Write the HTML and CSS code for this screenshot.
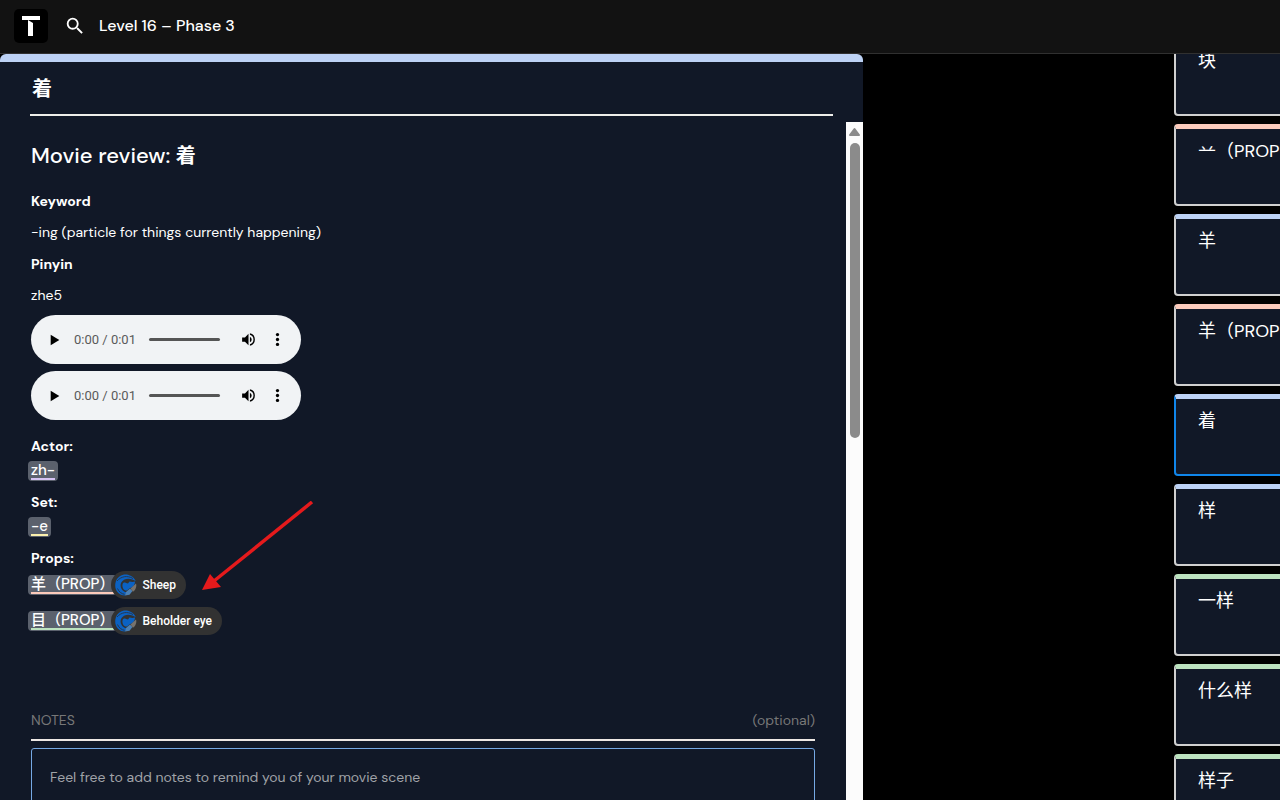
FILE: index.html
```html
<!DOCTYPE html>
<html lang="en">
<head>
<meta charset="utf-8">
<meta name="viewport" content="width=device-width, initial-scale=1">
<title>Level 16 – Phase 3</title>
<link rel="stylesheet" href="styles.css">
</head>
<body>
<svg width="0" height="0" class="sprite" aria-hidden="true">
  <symbol id="play" viewBox="0 0 24 24"><path d="M7 4v16l13-8z"/></symbol>
  <symbol id="volume" viewBox="0 0 24 24"><path d="M3 9v6h4l5 5V4L7 9H3zm13.500 3A4.500 4.500 0 0 0 14 7.970v8.050A4.470 4.470 0 0 0 16.500 12zM14 3.230v2.060a7 7 0 0 1 0 13.420v2.060a9 9 0 0 0 0-17.540z"/></symbol>
  <symbol id="more" viewBox="0 0 24 24"><circle cx="12" cy="5" r="2.300"/><circle cx="12" cy="12" r="2.300"/><circle cx="12" cy="19" r="2.300"/></symbol>
  <symbol id="eye" viewBox="0 0 22 22">
    <path fill="#0b62c4" d="M1 7C3 2 8-.5 13 .7c3.500.8 6.500 3.300 7.800 6.600C17.500 5 13 3.600 9 5.800 5.500 7.800 4.600 12 6.600 15c1 1.600 3 3 5 3.300L10 21.600C4 21.400.2 17 .2 11.500c0-1.600.2-3 .8-4.500z"/>
    <path fill="#0b62c4" d="M7.500 10.500c.5-2 2-2.500 3.500-1.500l2 .5 1.500-2 3 .5 2.500-.5c0 3-2 6-5 6.500l-3 2.500c-3 .5-5-2.500-4.500-6z"/>
    <path stroke="#26384f" stroke-width="1" fill="none" d="M2 7C6 2.500 12 1 18 4.500M2.500 14.500C4 18 7 20 9.500 20.300"/>
    <path fill="#4b80b5" d="M11 18l4-3.500 2.500 2.500-3 3.800-4.500.7z"/>
    <path fill="#77736e" d="M15.500 14.500L21 9.500c1 3-.5 6.500-3 8.300z"/>
  </symbol>
</svg>

<header class="topbar">
  <a class="logo" href="#" aria-label="Home">
    <svg viewBox="0 0 34 34" width="34" height="34"><path fill="#fff" d="M8 7h18v4H8zM14 11l5 3v13h-5z"/></svg>
  </a>
  <button class="search" type="button" aria-label="Search">
    <svg viewBox="0 0 24 24" width="22" height="22"><path fill="#fff" d="M15.500 14h-.79l-.28-.27A6.470 6.470 0 0 0 16 9.500 6.500 6.500 0 1 0 9.500 16c1.610 0 3.090-.59 4.230-1.570l.27.28v.79l5 4.990L20.490 19l-4.990-5zm-6 0a4.500 4.500 0 1 1 0-9 4.500 4.500 0 0 1 0 9z"/></svg>
  </button>
  <span class="level">Level 16 – Phase 3</span>
</header>

<main class="layout">
  <section class="panel">
    <div class="panel-head"><h1 lang="zh">着</h1></div>
    <div class="panel-scroll">
      <div class="content">
        <h2>Movie review: <b lang="zh">着</b></h2>
        <dl class="facts">
          <dt>Keyword</dt><dd>-ing (particle for things currently happening)</dd>
          <dt>Pinyin</dt><dd>zhe5</dd>
        </dl>
        <div class="players">
          <div class="player">
            <button type="button" aria-label="Play"><svg><use href="#play"/></svg></button>
            <span class="time">0:00 / 0:01</span>
            <input type="range" aria-label="Position" value="0">
            <button type="button" aria-label="Mute"><svg><use href="#volume"/></svg></button>
            <button type="button" aria-label="More options"><svg><use href="#more"/></svg></button>
          </div>
          <div class="player">
            <button type="button" aria-label="Play"><svg><use href="#play"/></svg></button>
            <span class="time">0:00 / 0:01</span>
            <input type="range" aria-label="Position" value="0">
            <button type="button" aria-label="Mute"><svg><use href="#volume"/></svg></button>
            <button type="button" aria-label="More options"><svg><use href="#more"/></svg></button>
          </div>
        </div>
        <div class="group">
          <h3>Actor:</h3>
          <a class="chip actor" href="#"><span>zh-</span></a>
        </div>
        <div class="group">
          <h3>Set:</h3>
          <a class="chip set" href="#"><span>-e</span></a>
        </div>
        <div class="group">
          <h3>Props:</h3>
          <ul class="props">
            <li><a class="chip pink" href="#"><span>羊（PROP）</span></a><button class="pill" type="button"><svg><use href="#eye"/></svg>Sheep</button></li>
            <li><a class="chip green" href="#"><span>目（PROP）</span></a><button class="pill" type="button"><svg><use href="#eye"/></svg>Beholder eye</button></li>
          </ul>
        </div>
        <div class="notes">
          <div class="notes-head"><label for="notes">NOTES</label><span>(optional)</span></div>
          <textarea id="notes" placeholder="Feel free to add notes to remind you of your movie scene"></textarea>
        </div>
        <svg class="arrow" viewBox="0 0 112 92" width="112" height="92" aria-hidden="true"><path stroke="#e51a1c" stroke-width="3.500" d="M110 1L12 80"/><path fill="#e51a1c" d="M0 89L8 73 19 86z"/></svg>
      </div>
      <div class="scrollbar" aria-hidden="true">
        <svg viewBox="0 0 17 21" width="17" height="21"><path fill="#8b8b8b" stroke="#8b8b8b" stroke-width="2" stroke-linejoin="round" d="M8.500 7L13 13H4z"/></svg>
        <div class="thumb"></div>
      </div>
    </div>
  </section>

  <nav class="cards" lang="zh" aria-label="Lessons">
    <a class="card blue" href="#">块</a>
    <a class="card pink" href="#">䒑（PROP）</a>
    <a class="card blue" href="#">羊</a>
    <a class="card pink" href="#">羊（PROP）</a>
    <a class="card blue current" href="#" aria-current="true">着</a>
    <a class="card blue" href="#">样</a>
    <a class="card green" href="#">一样</a>
    <a class="card green" href="#">什么样</a>
    <a class="card green" href="#">样子</a>
  </nav>
</main>
</body>
</html>
```
FILE: styles.css
```css
* { box-sizing: border-box; }
body {
  margin: 0;
  height: 100vh;
  display: flex;
  flex-direction: column;
  overflow: hidden;
  background: #000;
  color: #fff;
  font: 14px/20px "DM Sans", Inter, "Noto Sans CJK SC", sans-serif;
}
h1, h2, h3, dl, dd, ul { margin: 0; padding: 0; }
a { color: inherit; text-decoration: none; }
button { border: 0; padding: 0; background: none; color: inherit; font: inherit; display: flex; align-items: center; }
.sprite { position: absolute; }

.topbar {
  flex: none;
  height: 54px;
  display: flex;
  align-items: center;
  padding: 0 14px 2px;
  background: #121212;
  border-bottom: 1px solid #303030;
}
.logo { display: flex; background: #000; border-radius: 5px; }
.search { margin: 0 13px 0 16px; }
.level { font-size: 16px; font-weight: 500; }

.layout { flex: 1; min-height: 0; display: grid; grid-template-columns: 863fr 311fr 106fr; }
.panel {
  min-width: 0;
  min-height: 0;
  display: flex;
  flex-direction: column;
  background: #111827;
  border-top: 8px solid #bdd2f5;
  border-radius: 6px 6px 0 0;
}
.panel-head { padding: 16px 0 0; margin: 0 30px 6px; border-bottom: 2px solid #eeeeea; }
.panel-head h1 { font-size: 20px; line-height: 22px; font-weight: 700; padding: 0 2px 14px; }
.panel-scroll { flex: 1; min-height: 0; display: flex; }
.content { position: relative; flex: 1; min-width: 0; padding: 22px 31px 0; overflow: hidden; }
h2 { font-size: 22px; line-height: 24px; font-weight: 500; margin-bottom: 23px; }
h2 b { font-size: 20px; line-height: 20px; }
dt, h3 { font-size: 14px; line-height: 20px; font-weight: 700; }
dt { margin-bottom: 11px; }
dd { margin-bottom: 12px; }
dd:last-child { margin-bottom: 10px; }

.players { display: flex; flex-direction: column; gap: 7px; margin-bottom: 16px; }
.player {
  width: 270px;
  height: 49px;
  display: flex;
  align-items: center;
  padding: 0 15px;
  border-radius: 25px;
  background: #f1f3f5;
  color: #000;
}
.player svg { width: 17px; height: 17px; }
.player button:first-child svg { width: 16px; height: 16px; }
.time { margin: 0 13px 0 12px; font: 13px/16px Roboto, sans-serif; color: #5a5a5a; white-space: nowrap; }
.player input {
  appearance: none;
  flex: 1;
  min-width: 0;
  height: 3px;
  margin: 0 20px 0 0;
  border-radius: 2px;
  background: #555;
}
.player input::-webkit-slider-thumb { appearance: none; width: 0; height: 0; }
.player input + button { margin-right: 12px; }

.group { margin-bottom: 11px; }
.group h3 { margin-bottom: 5px; }
.chip {
  display: inline-block;
  margin-left: -3px;
  padding: 1px 3px 0;
  border-radius: 4px;
  background: #5b616d;
  vertical-align: top;
  font-size: 15px;
  font-weight: 500;
}
.chip span { display: block; line-height: 16px; margin-bottom: 1px; border-bottom: 2px solid; }
.chip.actor span { border-color: #d5c3f3; }
.chip.set span { border-color: #fbf0ad; }
.chip.pink span { border-color: #fbcabb; }
.chip.green span { border-color: #bce3bf; }
.props { list-style: none; display: flex; flex-direction: column; gap: 8px; }
.props li { display: flex; align-items: center; }
.props .chip { margin-right: -6px; }
.group:has(.props) h3 { margin-bottom: 3px; }
.pill {
  position: relative;
  height: 28px;
  padding: 0 10px 0 4px;
  gap: 5px;
  border-radius: 14px;
  background: #323232;
  font: 500 12px/16px Roboto, sans-serif;
}
.pill svg { width: 22px; height: 22px; }

.notes { margin-top: 75px; }
.notes-head { display: flex; justify-content: space-between; padding-bottom: 9px; margin-bottom: 7px; border-bottom: 2px solid #eee8e4; color: #777; }
textarea {
  display: block;
  width: 100%;
  height: 120px;
  padding: 18px;
  border: 1px solid #76a9e4;
  border-radius: 3px;
  background: transparent;
  color: #fff;
  font: inherit;
  resize: none;
}
textarea::placeholder { color: #a0a3a8; }
.arrow { position: absolute; left: 202px; top: 379px; }
.scrollbar { flex: 0 0 17px; background: #fcfcfc; }
.scrollbar svg { display: block; }
.thumb { width: 10px; height: 295px; margin: 0 auto; border-radius: 5px; background: #8b8b8b; }

.cards { grid-column: 3; min-width: 0; min-height: 0; overflow: hidden; }
.card {
  display: block;
  width: 280px;
  height: 82px;
  margin-bottom: 8px;
  padding: 10px 22px;
  border: 2px solid #d0d0d0;
  border-top-width: 5px;
  border-radius: 4px;
  background: #111827;
  font-size: 18px;
  line-height: 24px;
}
.card:first-child { margin-top: -20px; }
.card.current { border-color: #1086ea; }
.card.blue { border-top-color: #bdd2f5; }
.card.pink { border-top-color: #fbcabb; }
.card.green { border-top-color: #bce3bf; }
```
